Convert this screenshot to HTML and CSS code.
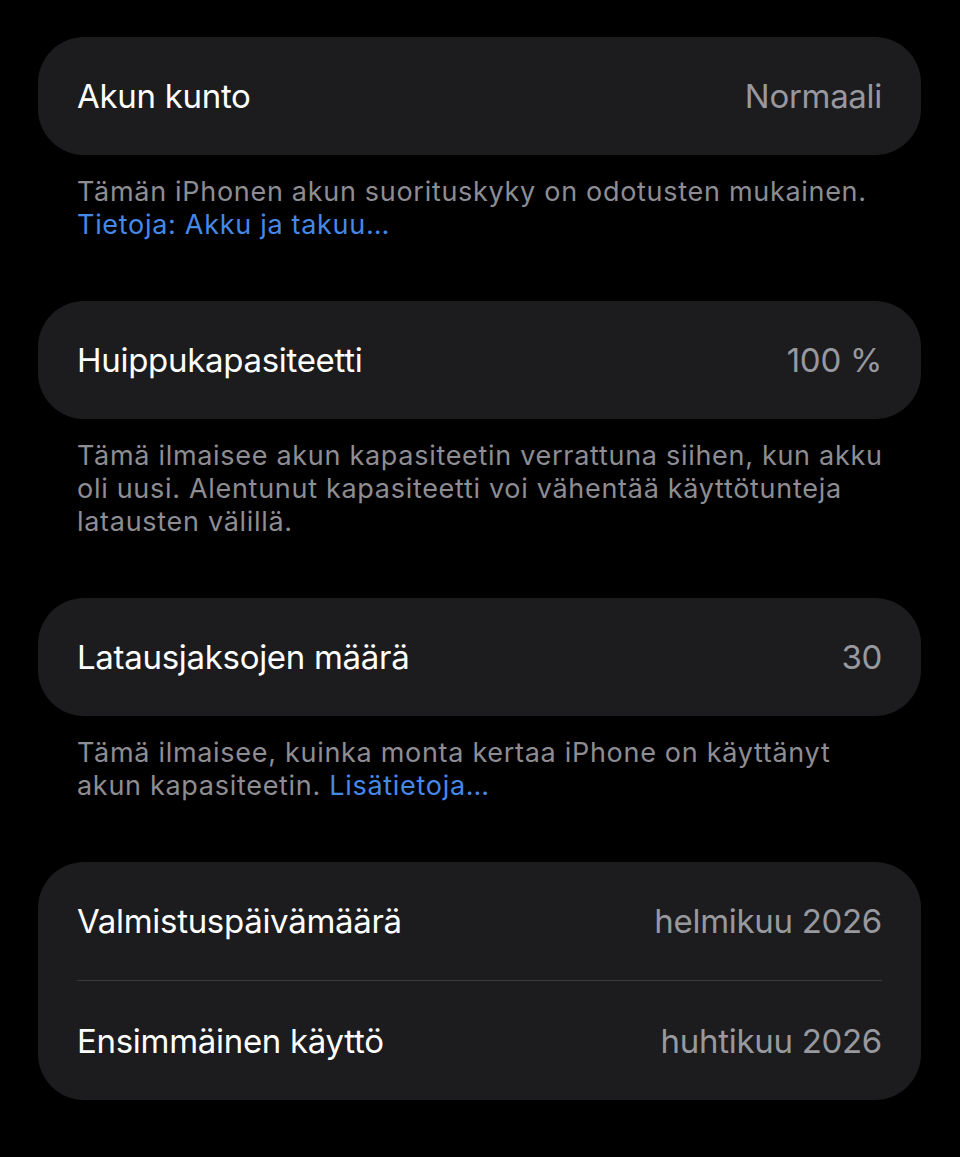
FILE: index.html
```html
<!DOCTYPE html>
<html lang="fi">
<head>
  <meta charset="UTF-8">
  <meta name="viewport" content="width=device-width, initial-scale=1.0">
  <title>Akun kunto</title>
  <link rel="stylesheet" href="styles.css">
</head>
<body>
  <div class="page">
    <div class="group">
      <div class="row">
        <span class="label">Akun kunto</span>
        <span class="value">Normaali</span>
      </div>
    </div>
    <p class="footer">Tämän iPhonen akun suorituskyky on odotusten mukainen.<br><a href="#" class="link">Tietoja: Akku ja takuu…</a></p>

    <div class="group">
      <div class="row">
        <span class="label">Huippukapasiteetti</span>
        <span class="value">100 %</span>
      </div>
    </div>
    <p class="footer">Tämä ilmaisee akun kapasiteetin verrattuna siihen, kun akku<br>oli uusi. Alentunut kapasiteetti voi vähentää käyttötunteja<br>latausten välillä.</p>

    <div class="group">
      <div class="row">
        <span class="label">Latausjaksojen määrä</span>
        <span class="value">30</span>
      </div>
    </div>
    <p class="footer">Tämä ilmaisee, kuinka monta kertaa iPhone on käyttänyt<br>akun kapasiteetin. <a href="#" class="link">Lisätietoja…</a></p>

    <div class="group">
      <div class="row">
        <span class="label">Valmistuspäivämäärä</span>
        <span class="value">helmikuu 2026</span>
      </div>
      <div class="row">
        <span class="label">Ensimmäinen käyttö</span>
        <span class="value">huhtikuu 2026</span>
      </div>
    </div>
  </div>
</body>
</html>
```

FILE: styles.css
```css
body {
  margin: 0;
  background-color: #000;
  font-family: Inter, "Noto Sans", "Liberation Sans", sans-serif;
  color: #fff;
}
.page {
  padding: 37px 39px 0 38px;
}
.group {
  background-color: #1c1c1e;
  border-radius: 46px;
  padding: 0 39px;
}
.row {
  display: flex;
  justify-content: space-between;
  align-items: center;
  height: 118px;
  font-size: 33px;
  letter-spacing: -0.3px;
}
.row + .row {
  border-top: 1px solid #3a3a3c;
  height: 119px;
}
.label {
  color: #fff;
}
.value {
  color: #98989f;
}
.footer {
  margin: 0 0 60px;
  padding: 20px 0 0 39px;
  font-size: 27px;
  letter-spacing: 0.7px;
  line-height: 33px;
  color: #8d8d93;
  white-space: nowrap;
}
.link {
  color: #4588e8;
  text-decoration: none;
}
```
